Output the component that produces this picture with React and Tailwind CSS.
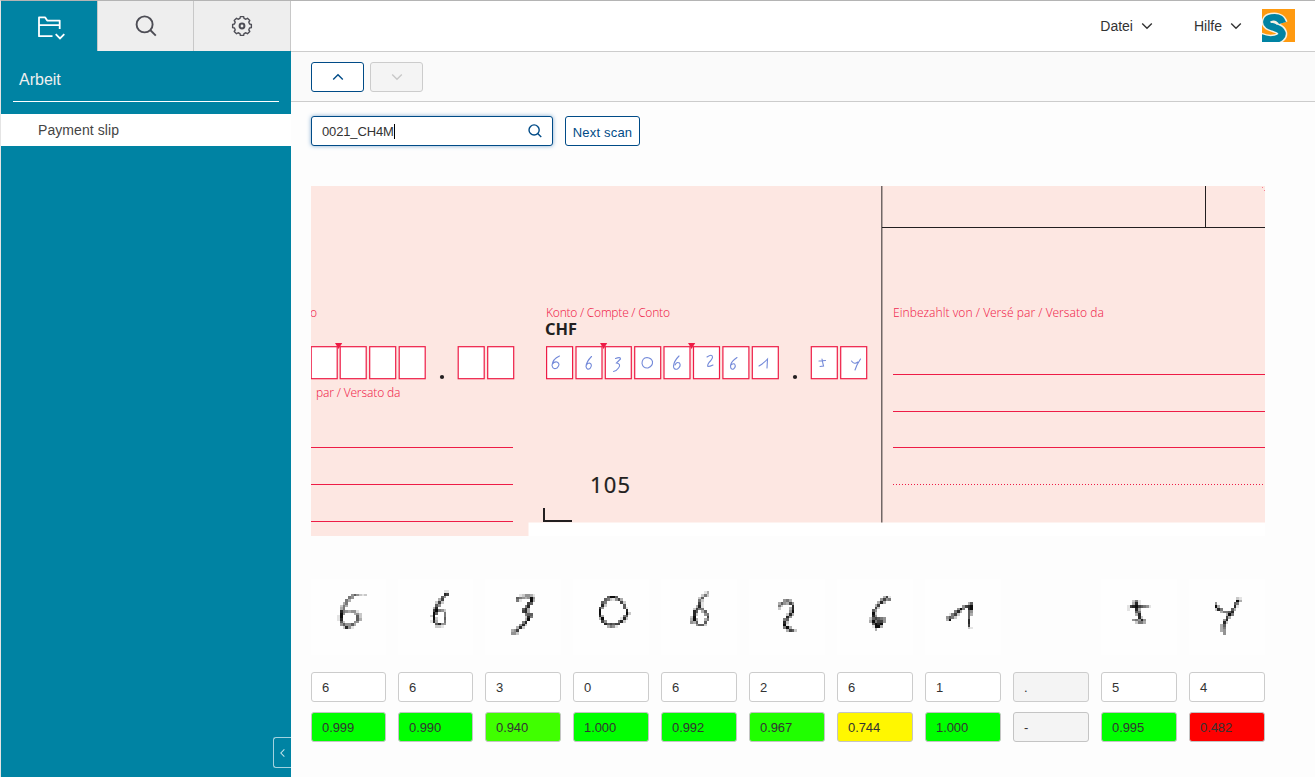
import React from "react";

// Each glyph is a small greyscale bitmap: 0-9 is the ink density, "." is empty.
const CELL = 2.7;
const DIGITS = [
  { value: "6", score: "0.999", box: "w-[75px]", fill: "bg-[#00ff00]", x: 26.3, y: 14.7, rows: [
    ".....464212", "....54.....", "...53......", "..35.......", ".253.......", ".35........", ".8543441...",
    ".94...342..", "19.....62..", "18.....63..", ".62...44...", ".464463....", "..2841....."] },
  { value: "6", score: "0.990", box: "w-[75px]", fill: "bg-[#00ff00]", x: 32, y: 11.3, rows: [
    ".....11", ".....87", "....64.", "...37..", "..272..", "..64...", ".38....", ".79542.", ".96..5.", "29...5.", ".92..6.", "183..5.", "..6844.", "..221.."] },
  { value: "3", score: "0.940", box: "w-[76px]", fill: "bg-[#40ff00]", x: 26, y: 15, rows: [
    "...124431", "..6543494", "..51...93", "......76.", ".....58..", "....683..", "....783..", ".....566.", ".....285.", ".....39..", "....58...", "...482...", "..382....", "347......", "442......"] },
  { value: "0", score: "1.000", box: "w-[76px]", fill: "bg-[#00ff00]", x: 25.7, y: 16.7, rows: [
    "...6996.....", "..6521473...", ".65.....72..", ".82......6..", "74.......61.", "9.........8.", "9.........92", "83.......56.", "39......182.", ".74....582..", "..867677....", "...3541....."] },
  { value: "6", score: "0.992", box: "w-[76px]", fill: "bg-[#00ff00]", x: 29.3, y: 12.3, rows: [
    ".....13", "....252", "...26..", "...52..", "...71..", "..381..", ".2755..", ".86.36.", ".82..45", "29....7", "393..35", "436..6.", "..4662."] },
  { value: "2", score: "0.967", box: "w-[76px]", fill: "bg-[#20ff00]", x: 29, y: 20.3, rows: [
    "..453..", "364374.", "52...8.", "2...38.", "....49.", "...283.", "...84..", "..56...", "..82...", "..91...", "..593..", "...3762"] },
  { value: "6", score: "0.744", box: "w-[76px]", fill: "bg-[#fff700]", x: 32.3, y: 16.7, rows: [
    ".....371", "....4745", "...383..", "..37....", "..72....", ".64.....", ".92.....", ".84.....", "267654..", "395774..", ".6989...", ".1993...", "..3....."] },
  { value: "1", score: "1.000", box: "w-[76px]", fill: "bg-[#00ff00]", x: 21, y: 23.3, rows: [
    "........36", "......4789", "....495.89", "...583..64", ".1572...63", "4652....6.", "39......8.", "........8.", "........7.", "........21"] },
  { value: ".", score: "-", box: "w-[76px]", fill: "bg-[#f4f4f4]", blank: true, rows: [] },
  { value: "5", score: "0.995", box: "w-[76px]", fill: "bg-[#00ff00]", x: 26, y: 20.7, rows: [
    "..251....", "..381....", "178976541", "1..83....", "...65....", "...38....", "....82...", "..45484..", "...2553.."] },
  { value: "4", score: "0.482", box: "w-[76px]", fill: "bg-[#ff0000]", x: 25.7, y: 18, rows: [
    "........21", "........93", "4......65.", "93.....81.", "285...63..", "..35568...", "....395...", "....73....", "...48.....", "...82.....", "..36......", "..35......", "..34......", "...4......"] },
];

function Bitmap({ x, y, rows }) {
  return (
    <svg width="76" height="76" viewBox="0 0 76 76" shapeRendering="crispEdges">
      <g transform={`translate(${x} ${y})`}>
        {rows.flatMap((row, r) =>
          [...row].map((c, i) =>
            c === "." ? null : (
              <rect key={`${r}-${i}`} x={i * CELL} y={r * CELL} width={CELL} height={CELL} fill="#000" fillOpacity={Number(c) / 9.5} />
            )
          )
        )}
      </g>
    </svg>
  );
}

function Chevron({ d, className }) {
  return (
    <svg width="12" height="8" viewBox="0 0 12 8" fill="none" stroke="currentColor" strokeWidth="1.4" className={className}>
      <path d={d} />
    </svg>
  );
}
const DOWN = "M1.2 1.5 6 6.2 10.8 1.5";
const UP = "M1.2 6.5 6 1.8 10.8 6.5";

function FolderIcon() {
  return (
    <svg width="28" height="24" viewBox="0 0 28 24" fill="none" stroke="#fff" strokeWidth="1.8">
      <path d="M15.5 20.200H2V1.400h6.200l2 3.200h12.500V13M2 9.200h20.700" strokeLinejoin="round" />
      <path d="M18.700 18.200l4.300 4.300 4.300-4.300" />
    </svg>
  );
}

function SearchIcon({ size, stroke }) {
  return (
    <svg width={size} height={size} viewBox="0 0 22 22" fill="none" stroke="currentColor" strokeWidth={stroke}>
      <circle cx="9.600" cy="9.400" r="8" />
      <path d="M15.200 15l5.600 5.600" />
    </svg>
  );
}

function GearIcon() {
  const pts = [];
  for (let k = 0; k < 8; k++) {
    [[-15, 7.8], [-10, 9.5], [10, 9.5], [15, 7.8]].forEach(([o, r]) => {
      const a = ((k * 45 + o) * Math.PI) / 180;
      pts.push(`${(11 + r * Math.cos(a)).toFixed(2)},${(11 + r * Math.sin(a)).toFixed(2)}`);
    });
  }
  return (
    <svg width="22" height="22" viewBox="0 0 22 22" fill="none" stroke="#4d4d55" strokeLinejoin="round">
      <polygon points={pts.join(" ")} strokeWidth="1.4" />
      <circle cx="11" cy="11" r="2.400" strokeWidth="2" />
    </svg>
  );
}

function Logo() {
  const s = "M20.500 14C19 8.800 13.500 8.400 9.500 9 4.500 9.800 3.600 13.600 6.500 16 10 18.500 18.500 18.500 20 24 21.300 30.500 8 33-2 28.500";
  return (
    <svg width="33" height="33" viewBox="0 0 33 33" className="-translate-y-px">
      <rect width="33" height="33" fill="#ff9a10" />
      <g fill="none">
        <path d={s} stroke="#f4f1e4" strokeWidth="10.400" />
        <path d={s} stroke="#0083a3" strokeWidth="7.400" />
      </g>
      <path d="M8.500 13.300q5-2.300 7 2" fill="none" stroke="#f4f1e4" strokeWidth="1.800" />
    </svg>
  );
}

const LEFT_BOXES = [0.5, 29.5, 59, 88.5, 147.5, 177];
const MAIN_BOXES = [235.9, 265.3, 294.6, 324, 353.3, 382.8, 412.2, 441.6, 500.6, 530];
const HANDWRITING = [
  "M248.500 170q-7 3-7.500 9.500q1 4.500 5 2.500q4-4 0-6q-3-.5-4.500 2",
  "M280.500 170.500q-5 5-5.500 10q1 4 4 2q3-4-.5-5.500q-2.500 0-3 2",
  "M304.500 172.500q5-2 5 .5l-4 4q5 1 2 5q-2 3-5 3.500",
  "M336 171.500q-5 .5-5 6q1 5 6 4.500q5-2 4.500-6.500q-1-3.500-5.500-4",
  "M368 170q-5 5-5.500 10q0 4 4 3q4-3 2-6q-3-1.500-4.500 2",
  "M396 171q5-3.500 5.500 0q0 2-3.500 5.500q-2 3-1 4q2 0 5-1.500",
  "M426 171.500q-6 4-6.500 8q0 4.500 3 3.500q3-2.500 1-5q-2-1-4 1.500",
  "M448 180q5-3 8.500-7l-.5 9",
  "M508 175l6.500-.5M511 173q.5 3 1.500 7l-3.500.5",
  "M540.500 175q3 4 6.500 1M549.500 173q-4 6-5.500 11",
];

function PaymentSlip() {
  const red = "#ee1c46";
  const label = { fill: "#f02c51", fontSize: 12, fontFamily: '"Noto Sans", "Open Sans", sans-serif', fontWeight: 350 };
  return (
    <svg width="954" height="350" viewBox="0 0 954 350" className="block">
      <rect width="954" height="350" fill="#fff" />
      <path d="M0 0H954V336.500H217.500V350H0z" fill="#fde7e2" />
      <g fill="#fff" stroke={red} strokeWidth="1.200">
        {[...LEFT_BOXES, ...MAIN_BOXES].map((x) => (
          <rect key={x} x={x - 0.3} y="160.700" width="26" height="32" />
        ))}
      </g>
      <g fill={red}>
        <path d="M24 157h7.200l-3.600 6z" />
        <path d="M289 157h7.200l-3.600 6z" />
        <path d="M377 157h7.200l-3.600 6z" />
      </g>
      <g fill="#231f20">
        <circle cx="131" cy="191" r="2.100" />
        <circle cx="484" cy="191" r="2.100" />
        <path d="M894 0h1v41h-1zM571 41h383v1H571zM232 322h2v12h27v2h-29z" />
        <path d="M570.200 0h1.200v336.500h-1.200z" fillOpacity=".8" />
      </g>
      <g stroke={red} shapeRendering="crispEdges">
        <path d="M0 298.500h202M582 188.500h372" />
        <path d="M0 261.500h202M0 335.500h202M582 225.500h372M582 261.500h372" />
        <path d="M582 298.500h372" strokeDasharray="1 2" />
        <path d="M951 1.500h1M953 4.500h1" strokeOpacity=".5" />
      </g>
      <g fill="none" stroke="#748ad9" strokeWidth="1.100" strokeLinecap="round">
        {HANDWRITING.map((d) => (
          <path key={d} d={d} />
        ))}
      </g>
      <text {...label} x="-1" y="131">o</text>
      <text {...label} x="235" y="131" textLength="124">Konto / Compte / Conto</text>
      <text {...label} x="5" y="211" textLength="84.500">par / Versato da</text>
      <text {...label} x="582" y="131" textLength="211">Einbezahlt von / Versé par / Versato da</text>
      <text {...label} x="234" y="149" fill="#231f20" fontSize="16" fontWeight="700" textLength="32" lengthAdjust="spacingAndGlyphs">CHF</text>
      <text {...label} x="279" y="307" fill="#231f20" fontSize="22" fontWeight="400" textLength="40" stroke="#231f20" strokeWidth=".2">105</text>
    </svg>
  );
}

export default function App() {
  return (
    <div className="flex h-[777px] w-[1315px] overflow-hidden border-t border-l border-t-[#b4b4b4] border-l-[#e4e4e4] bg-[#fdfdfd] font-['Liberation_Sans',Arial,sans-serif] text-[13px] text-[#333]">
      <aside className="relative flex w-[290px] shrink-0 flex-col bg-[#0083a3]">
        <nav className="flex h-[50px] shrink-0">
          <div className="flex w-24 items-center justify-center pt-1 pl-1">
            <FolderIcon />
          </div>
          <div className="flex w-24 items-center justify-center border-l border-[#c8c8c8] bg-[#eee] text-[#4d4d55]">
            <SearchIcon size={22} stroke={1.9} />
          </div>
          <div className="flex w-[98px] items-center justify-center border-x border-[#c8c8c8] bg-[#eee]">
            <GearIcon />
          </div>
        </nav>
        <div className="mx-3 flex h-[51px] items-center border-b border-white pt-2 pl-1.5 text-base text-[#f0f0f0]">Arbeit</div>
        <div className="mt-3 flex h-8 items-center bg-white pl-[37px] text-sm tracking-[0.07px] text-[#444]">Payment slip</div>
        <button className="absolute right-0 bottom-[9px] flex h-[31px] w-[18px] items-center justify-center rounded-l-[3px] border border-r-0 border-[#a3d3df] text-[#c4e3ea]">
          <Chevron d={UP} className="w-[9px] -rotate-90" />
        </button>
      </aside>
      <main className="flex flex-1 flex-col">
        <header className="flex h-[51px] shrink-0 items-center justify-end border-b border-[#ccc] bg-white pr-5 text-sm">
          <div className="mr-[41px] flex items-center gap-2">
            Datei <Chevron d={DOWN} />
          </div>
          <div className="mr-[20px] flex items-center gap-2">
            Hilfe <Chevron d={DOWN} />
          </div>
          <Logo />
        </header>
        <div className="flex h-[50px] shrink-0 items-center gap-1.5 border-b border-[#ccc] bg-[#fafafa] pl-5">
          <button className="flex h-[30px] w-[53px] items-center justify-center rounded-[3px] border border-[#004b87] bg-white text-[#004b87]">
            <Chevron d={UP} />
          </button>
          <button className="flex h-[30px] w-[53px] items-center justify-center rounded-[3px] border border-[#ccc] bg-[#f4f4f4] text-[#c8c8c8]">
            <Chevron d={DOWN} />
          </button>
        </div>
        <div className="flex flex-col pt-3.5 pl-5">
          <div className="flex gap-3">
            <div className="flex h-[30px] w-[242px] items-center rounded-[3px] border border-[#004b87] bg-white pr-2.5 pl-2.5 shadow-[0_0_4px_#7fa9cf]">
              <span className="pt-0.5 tracking-[-0.15px]">0021_CH4M</span>
              <span className="h-[15px] w-px bg-black" />
              <span className="ml-auto text-[#004b87]">
                <SearchIcon size={14} stroke={2.2} />
              </span>
            </div>
            <button className="h-[30px] w-[75px] rounded-[3px] border border-[#004b87] bg-white pt-1 text-[13px] tracking-[0.2px] whitespace-nowrap text-[#004b87]">Next scan</button>
          </div>
          <div className="mt-10">
            <PaymentSlip />
          </div>
          <div className="mt-[43px] flex gap-3">
            {DIGITS.map((d, i) => (
              <div key={i} className={`flex shrink-0 flex-col ${d.box}`}>
                <div className={`h-[76px] ${d.blank ? "" : "bg-[#fefefe]"}`}>
                  <Bitmap x={d.x || 0} y={d.y || 0} rows={d.rows} />
                </div>
                <div className={`mt-[17px] flex h-[30px] items-center rounded-[3px] border border-[#ccc] pt-0.5 pl-2.5 ${d.blank ? "bg-[#f4f4f4]" : "bg-white"}`}>{d.value}</div>
                <div className={`mt-2.5 flex h-[30px] items-center rounded-[3px] border border-[#c4c4c4] pt-0.5 pl-2.5 tracking-[-0.1px] ${d.fill}`}>{d.score}</div>
              </div>
            ))}
          </div>
        </div>
      </main>
    </div>
  );
}
